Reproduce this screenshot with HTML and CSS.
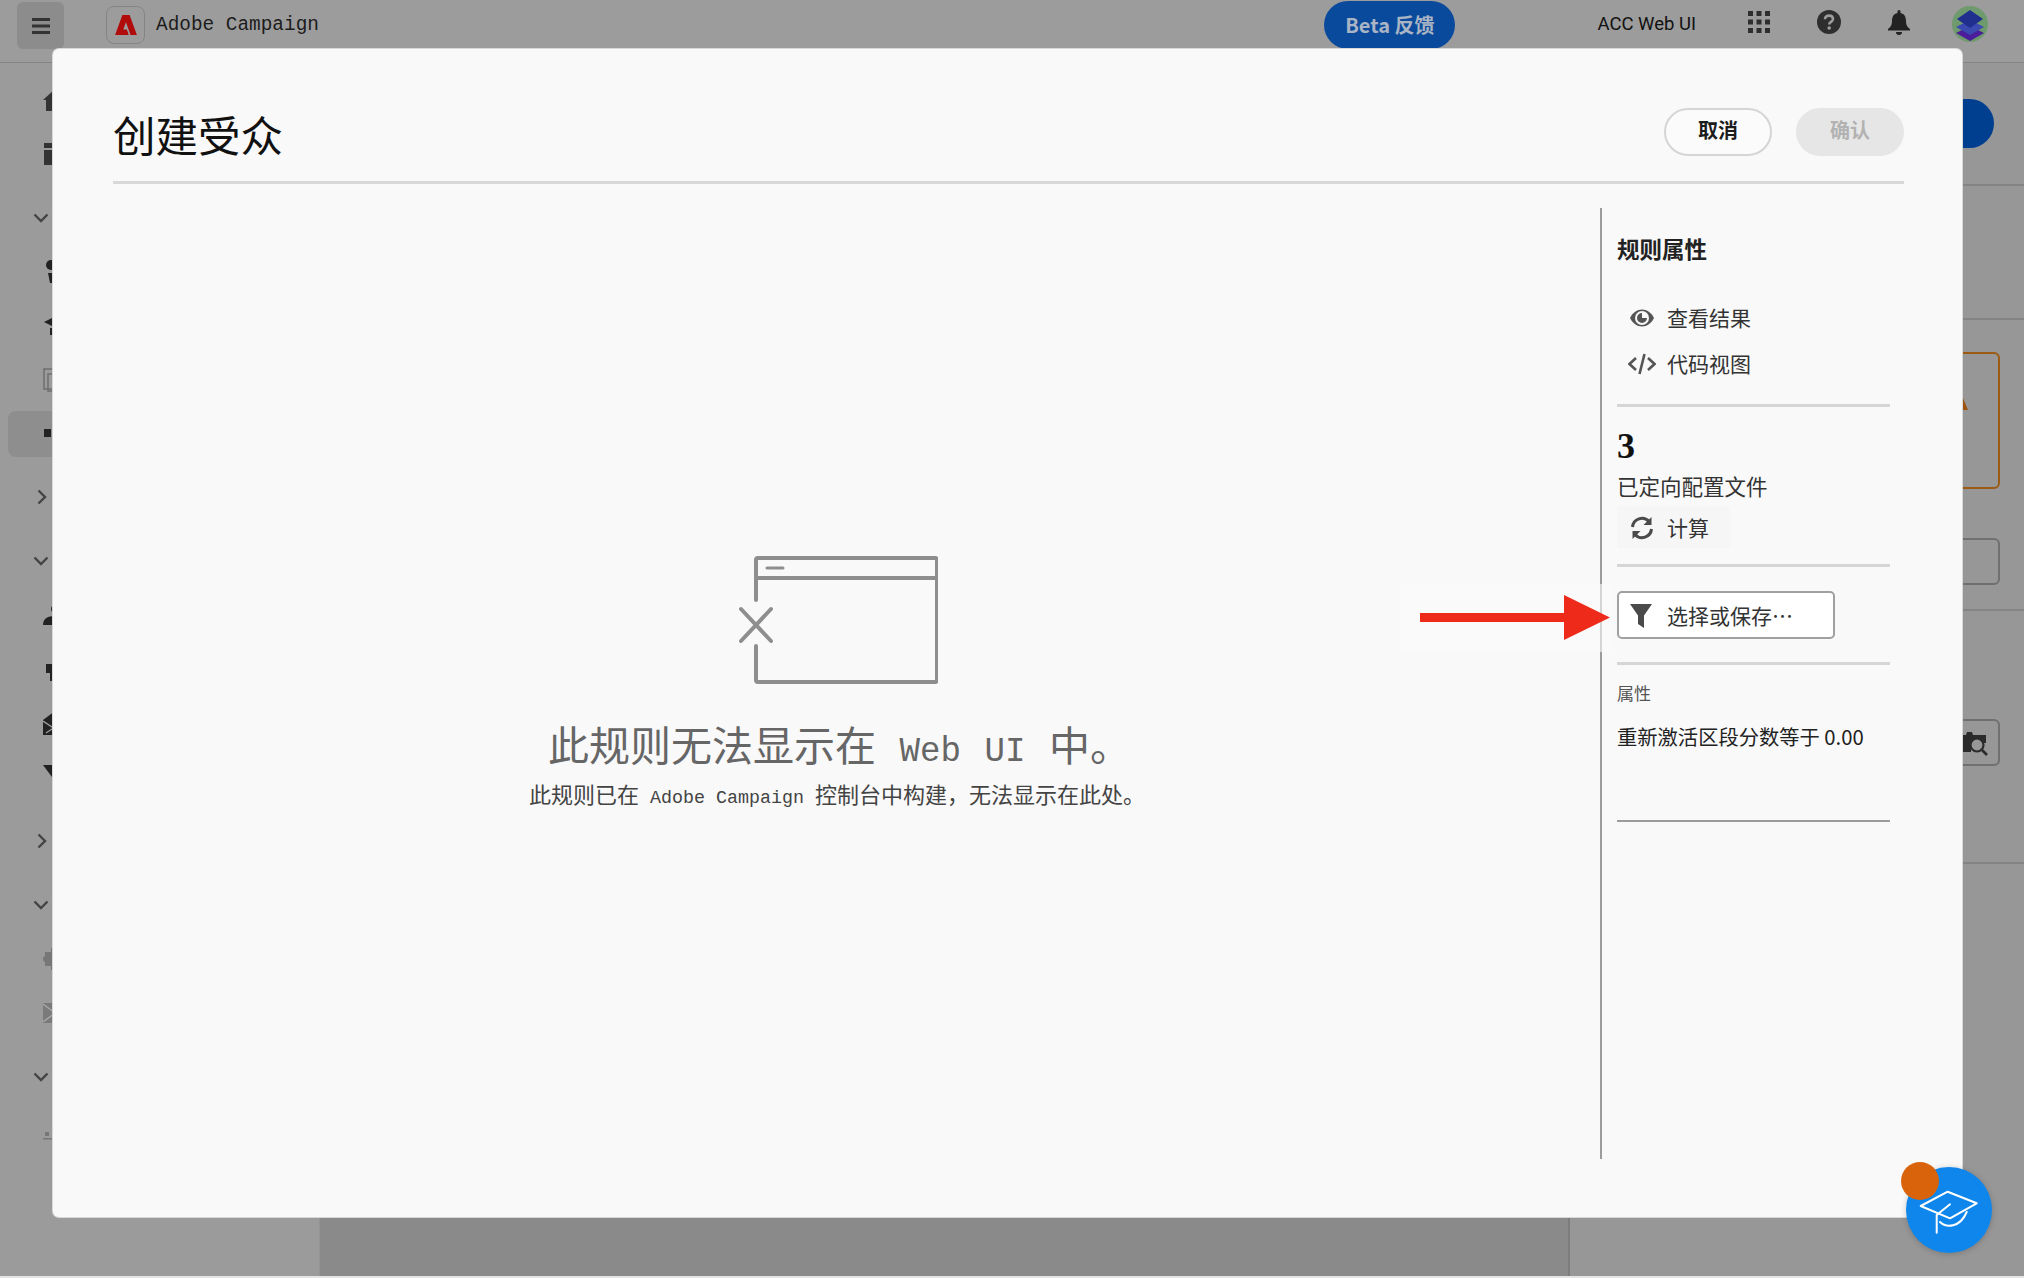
FILE: index.html
```html
<!DOCTYPE html>
<html lang="zh-CN">
<head>
	<meta charset="UTF-8">
	<title>创建受众</title>
	<link rel="stylesheet" href="styles.css">
</head>
<body>
	<div class="page">
		<header class="topbar">
			<div class="menu-btn">
				<svg width="18" height="16" viewBox="0 0 18 16"><path d="M0 1.500h18M0 8h18M0 14.500h18" stroke="#333" stroke-width="3"/></svg>
			</div>
			<div class="logo-box">
				<svg width="22" height="20" viewBox="0 0 24 22"><path d="M8 0h8l8 22h-7l-5-14-3 8h4l2 6H0z" fill="#b00c0c"/></svg>
			</div>
			<span class="app-name">Adobe Campaign</span>
			<div class="topbar-right">
				<span class="beta-btn">Beta 反馈</span>
				<span class="org-name">ACC Web UI</span>
				<svg class="grid-icon" width="22" height="22" viewBox="0 0 22 22" fill="#2e2e2e"><path d="M0 0h5v5H0zM8.500 0h5v5h-5zM17 0h5v5h-5zM0 8.500h5v5H0zM8.500 8.500h5v5h-5zM17 8.500h5v5h-5zM0 17h5v5H0zM8.500 17h5v5h-5zM17 17h5v5h-5z"/></svg>
				<svg class="help-icon" width="24" height="24" viewBox="0 0 24 24"><circle cx="12" cy="12" r="12" fill="#2e2e2e"/><path d="M8 9.200C8 7 9.800 5.600 12 5.600s4 1.300 4 3.400c0 2.900-3.800 2.900-3.800 5.400" fill="none" stroke="#9b9b9b" stroke-width="2.600"/><circle cx="12.200" cy="18" r="1.800" fill="#9b9b9b"/></svg>
				<svg class="bell-icon" width="22" height="25" viewBox="0 0 22 25" fill="#222"><path d="M9.500 1.500a1.500 1.500 0 0 1 3 0V3C16.500 3.800 18 7 18 11c0 4 1.200 6 4 8v1.500H0V19c2.800-2 4-4 4-8 0-4 1.500-7.200 5.500-8z"/><path d="M8 22h6a3 3 0 0 1-6 0z"/></svg>
				<svg class="avatar" width="36" height="38" viewBox="0 0 36 38">
					<ellipse cx="18" cy="18" rx="18" ry="18" fill="#6f9a6e"/>
					<path d="M4 27l14-7 14 7-14 8z" fill="#4b1d9a"/>
					<path d="M4 21l14-7 14 7-14 8z" fill="#3a4ab0"/>
					<path d="M5 13L18 4l13 9-13 9z" fill="#202f8e"/>
				</svg>
			</div>
		</header>

		<div class="page-body">
			<nav class="sidebar">
				<div class="nav-row"><svg width="24" height="24" viewBox="0 0 24 24" fill="#333"><path d="M0 12L12 1l12 11h-3v11H3V12z"/></svg></div>
				<div class="nav-row"><svg width="24" height="24" viewBox="0 0 24 24" fill="#333"><path d="M1 1h22v5H1zM1 8h22v15H1z"/></svg></div>
				<div class="nav-row nav-head"><svg width="16" height="10" viewBox="0 0 16 10"><path d="M1.500 1.500L8 8l6.500-6.500" fill="none" stroke="#444" stroke-width="2.400"/></svg></div>
				<div class="nav-row"><svg width="24" height="24" viewBox="0 0 24 24" fill="#222"><circle cx="8" cy="5" r="5"/><path d="M5 13h7l-2 10H7z"/></svg></div>
				<div class="nav-row"><svg width="24" height="24" viewBox="0 0 24 24" fill="#222"><path d="M1 8l10-5v10zM7 14h5v7H7z"/></svg></div>
				<div class="nav-row"><svg width="24" height="24" viewBox="0 0 24 24" fill="none" stroke="#6f6f6f" stroke-width="1.500"><path d="M1 1h18v20H1z"/><path d="M5 6h16v17H5z"/></svg></div>
				<div class="nav-row nav-active"><svg width="24" height="24" viewBox="0 0 24 24" fill="#222"><path d="M1 7h7v8H1zM10 9h14v4H10z"/></svg></div>
				<div class="nav-row nav-head"><svg class="chev-r" width="10" height="16" viewBox="0 0 10 16"><path d="M1.500 1.500L8 8l-6.500 6.500" fill="none" stroke="#444" stroke-width="2.400"/></svg></div>
				<div class="nav-row nav-head"><svg width="16" height="10" viewBox="0 0 16 10"><path d="M1.500 1.500L8 8l6.500-6.500" fill="none" stroke="#444" stroke-width="2.400"/></svg></div>
				<div class="nav-row"><svg width="24" height="24" viewBox="0 0 24 24" fill="#222"><circle cx="13" cy="6" r="5"/><path d="M0 22c0-6 4-9 12-9s12 3 12 9z"/></svg></div>
				<div class="nav-row"><svg width="24" height="24" viewBox="0 0 24 24" fill="#222"><circle cx="12" cy="3" r="3"/><path d="M3 7h18v9h-4v8H7v-8H3z"/></svg></div>
				<div class="nav-row"><svg width="24" height="24" viewBox="0 0 24 24" fill="#222"><path d="M0 9l12-9 12 9v15H0z"/><path d="M0 10l12 8M3 22l9-6" stroke="#9b9b9b" stroke-width="1.500"/></svg></div>
				<div class="nav-row"><svg width="24" height="24" viewBox="0 0 24 24" fill="#222"><path d="M0 0h24L12 12v12h-3V12z"/></svg></div>
				<div class="nav-row nav-head"><svg class="chev-r" width="10" height="16" viewBox="0 0 10 16"><path d="M1.500 1.500L8 8l-6.500 6.500" fill="none" stroke="#444" stroke-width="2.400"/></svg></div>
				<div class="nav-row nav-head"><svg width="16" height="10" viewBox="0 0 16 10"><path d="M1.500 1.500L8 8l6.500-6.500" fill="none" stroke="#444" stroke-width="2.400"/></svg></div>
				<div class="nav-row"><svg width="24" height="24" viewBox="0 0 24 24" fill="#777"><circle cx="3" cy="12" r="3"/><path d="M2 5h6V1h10v22H8v-4H2z"/></svg></div>
				<div class="nav-row"><svg width="24" height="24" viewBox="0 0 24 24" fill="#7a7a7a"><path d="M0 2h24v20H0z"/><path d="M0 3l12 9-12 9" fill="none" stroke="#a5a5a5" stroke-width="1.500"/></svg></div>
				<div class="nav-row nav-head"><svg width="16" height="10" viewBox="0 0 16 10"><path d="M1.500 1.500L8 8l6.500-6.500" fill="none" stroke="#444" stroke-width="2.400"/></svg></div>
				<div class="nav-row"><svg width="24" height="24" viewBox="0 0 24 24" fill="#777"><path d="M0 19h24v1.500H0zM2 13h4v4H2z"/></svg></div>
			</nav>

			<main class="content"></main>

			<aside class="side">
				<section class="side-sec side-one"><div class="pill-blue"></div></section>
				<section class="side-sec side-two"></section>
				<section class="side-sec side-three">
					<div class="box box-warn"><svg width="8" height="12" viewBox="0 0 8 12"><path d="M3 0l5 12H0z" fill="#9c5410"/></svg></div>
					<div class="box"></div>
				</section>
				<section class="side-sec side-four">
					<div class="box box-search">
						<svg width="26" height="26" viewBox="0 0 26 26"><path d="M0 5h4l1-3h5l1 3h13v8H0zM0 13h9v9H0z" fill="#2b2b2b"/><circle cx="15" cy="15" r="6.500" fill="#979797" stroke="#2b2b2b" stroke-width="2.200"/><path d="M20 20l5 5" stroke="#2b2b2b" stroke-width="2.600"/></svg>
					</div>
				</section>
			</aside>
		</div>
	</div>

	<div class="modal">
		<div class="modal-head">
			<h1 class="modal-title">创建受众</h1>
			<div class="modal-btns">
				<span class="btn btn-cancel">取消</span>
				<span class="btn btn-ok">确认</span>
			</div>
		</div>
		<div class="modal-body">
			<div class="empty">
				<svg class="empty-img" width="199" height="128" viewBox="0 0 199 128" fill="none" stroke="#8e8e8e" stroke-width="4" stroke-linecap="round" stroke-linejoin="round">
					<path d="M17 44V4a2 2 0 0 1 2-2h177a2 2 0 0 1 2 2v120a2 2 0 0 1-2 2H19a2 2 0 0 1-2-2V90"/>
					<path d="M17 22h181"/>
					<path d="M28 12h16" stroke-width="3"/>
					<path d="M2 53l30 32M32 53L2 85"/>
				</svg>
				<h2 class="empty-title">此规则无法显示在<span class="latin"> Web UI </span>中。</h2>
				<p class="empty-text">此规则已在<span class="latin"> Adobe Campaign </span>控制台中构建，无法显示在此处。</p>
			</div>
			<div class="props">
				<div class="props-title">规则属性</div>
				<div class="act act-first">
					<svg width="24" height="24" viewBox="0 0 24 24"><path d="M0 12c2.800-5.500 7-8.500 12-8.500S21.200 6.500 24 12c-2.800 5.500-7 8.500-12 8.500S2.800 17.500 0 12z" fill="#555"/><circle cx="12" cy="12" r="7" fill="#f9f9f9"/><path d="M12 7a5 5 0 1 0 5 5h-5z" fill="#555"/></svg>
					<span>查看结果</span>
				</div>
				<div class="act">
					<svg class="code-icon" width="28" height="24" viewBox="0 0 28 24" fill="none" stroke="#555" stroke-width="2.600"><path d="M8 6l-6.500 6L8 18M20 6l6.500 6L20 18M16.500 2l-5 20"/></svg>
					<span>代码视图</span>
				</div>
				<div class="line line-a"></div>
				<div class="count">3</div>
				<div class="count-label">已定向配置文件</div>
				<div class="act act-calc">
					<svg width="24" height="24" viewBox="0 0 24 24" fill="none" stroke="#4a4a4a" stroke-width="3"><path d="M2.500 11A9.500 9.500 0 0 1 19 5.500M21.500 13A9.500 9.500 0 0 1 5 18.500"/><path d="M21.500 1v8h-8zM2.500 23v-8h8z" fill="#4a4a4a" stroke="none"/></svg>
					<span>计算</span>
				</div>
				<div class="line line-b"></div>
				<div class="select-btn">
					<svg width="22" height="24" viewBox="0 0 22 24" fill="#4a4a4a"><path d="M0 0h22l-8 11.500V24l-6-4v-8.500z"/></svg>
					<span>选择或保存…</span>
				</div>
				<div class="line line-c"></div>
				<div class="attr-label">属性</div>
				<div class="attr-value">重新激活区段分数等于 0.00</div>
				<div class="line line-end"></div>
			</div>
		</div>
	</div>

	<svg class="arrow" width="212" height="68" viewBox="0 0 212 68"><path d="M20 29h144V11l46 22.500L164 56V38H20z" fill="#ee2a1a"/></svg>

	<div class="fab">
		<svg width="86" height="86" viewBox="0 0 86 86" fill="none" stroke="#fff" stroke-width="2" stroke-linejoin="round" stroke-linecap="round">
			<path d="M14.700 39L41.700 24.700 70.700 36.300 44 51.300z"/>
			<path d="M44 37.300L30.700 48V65.700"/>
			<path d="M34 55c6 6 20 6 26.700-10"/>
		</svg>
	</div>
	<div class="fab-dot"></div>
</body>
</html>
```

FILE: styles.css
```css
html, body {
	margin: 0;
	padding: 0;
}
body {
	height: 1278px;
	overflow: hidden;
	background: #e4e4e4;
	font-family: "Noto Sans CJK SC", "Liberation Sans", sans-serif;
	color: #222;
}
h1, h2, p {
	margin: 0;
	font-weight: 400;
}
svg {
	display: block;
	flex: none;
}
.latin {
	font-family: "Liberation Mono", monospace;
	font-size: .833em;
}

/* page behind the dialog */
.page {
	height: 1276px;
	display: flex;
	flex-direction: column;
	background: #9b9b9b;
}
.topbar {
	height: 62px;
	flex: none;
	display: flex;
	align-items: flex-start;
	padding-left: 17px;
	border-bottom: 1px solid #848484;
	background: #9c9c9c;
}
.menu-btn {
	width: 47px;
	height: 47px;
	margin-top: 2px;
	display: flex;
	align-items: center;
	justify-content: center;
	border-radius: 6px;
	background: #8c8c8c;
}
.logo-box {
	width: 37px;
	height: 36px;
	margin: 6px 0 0 42px;
	display: flex;
	align-items: center;
	justify-content: center;
	border: 1px solid #848484;
	border-radius: 8px;
}
.app-name {
	margin: 9px 0 0 11px;
	font: 19.400px/32px "Liberation Mono", monospace;
	color: #1c1c1c;
}
.topbar-right {
	margin-left: auto;
	display: flex;
	align-items: flex-start;
	padding-right: 36px;
}
.beta-btn {
	width: 131px;
	height: 48px;
	margin-top: 1px;
	border-radius: 24px;
	background: #0a4a9c;
	color: #a9b4c4;
	font: 700 20px/48px "Noto Sans CJK SC", sans-serif;
	text-align: center;
}
.org-name {
	margin: 8px 0 0 142px;
	font: 18.500px/32px "Roboto", sans-serif;
	color: #111;
}
.grid-icon {
	margin: 11px 0 0 52px;
}
.help-icon {
	margin: 10px 0 0 47px;
}
.bell-icon {
	margin: 10px 0 0 47px;
}
.avatar {
	margin: 6px 0 0 42px;
}

.page-body {
	flex: 1;
	display: flex;
	min-height: 0;
}
.sidebar {
	width: 320px;
	flex: none;
	box-sizing: border-box;
	padding: 10px 0 0 8px;
	border-right: 1px solid #949494;
}
.nav-row {
	height: 54px;
	display: flex;
	align-items: center;
	padding-left: 35px;
}
.nav-head {
	margin-top: 10px;
	padding-left: 25px;
}
.chev-r {
	margin-left: 4px;
}
.nav-row.nav-active {
	height: 46px;
	margin: 4px 0;
	border-radius: 8px;
	background: #8e8e8e;
}
.nav-active + .nav-head {
	margin-top: 13px;
}
.content {
	flex: 1;
	background: #8a8a8a;
	border-right: 2px solid #7d7d7d;
}
.side {
	width: 454px;
	flex: none;
	background: #979797;
}
.side-sec {
	box-sizing: border-box;
	border-bottom: 2px solid #848484;
	padding-right: 24px;
}
.side-one {
	height: 123px;
	padding-top: 36px;
	padding-right: 30px;
}
.pill-blue {
	width: 200px;
	height: 49px;
	margin-left: auto;
	border-radius: 25px;
	background: #003f8f;
}
.side-two {
	height: 134px;
}
.side-three {
	height: 291px;
	padding-top: 32px;
}
.side-four {
	height: 253px;
	padding-top: 108px;
}
.box {
	width: 200px;
	height: 47px;
	margin-left: auto;
	box-sizing: border-box;
	border: 2px solid #707070;
	border-radius: 6px;
}
.box + .box {
	margin-top: 49px;
}
.box-warn {
	height: 137px;
	display: flex;
	align-items: flex-start;
	justify-content: flex-end;
	padding: 44px 30px 0 0;
	border-color: #9c5a14;
}
.box-search {
	display: flex;
	align-items: center;
	justify-content: flex-end;
	padding-right: 10px;
}

/* dialog */
.modal {
	position: absolute;
	left: 53px;
	top: 49px;
	width: 1909px;
	height: 1168px;
	box-sizing: border-box;
	padding: 0 58px 0 60px;
	border-radius: 6px;
	background: #f9f9f9;
	box-shadow: 0 0 0 1px #d8d8d8;
}
.modal-head {
	display: flex;
	align-items: flex-start;
	justify-content: space-between;
	padding: 59px 0 25px;
	border-bottom: 3px solid #d8d8d8;
}
.modal-title {
	margin-top: 6px;
	font-size: 42.500px;
	line-height: 40px;
	color: #111;
}
.modal-btns {
	display: flex;
	gap: 24px;
}
.btn {
	width: 108px;
	height: 48px;
	box-sizing: border-box;
	border-radius: 24px;
	font-size: 20px;
	font-weight: 700;
	line-height: 40px;
	text-align: center;
}
.btn-cancel {
	border: 2px solid #d5d5d5;
	background: #fbfbfb;
	color: #1c1c1c;
}
.btn-ok {
	border: 2px solid #e6e6e6;
	background: #e6e6e6;
	color: #b2b2b2;
}
.modal-body {
	height: 951px;
	margin-top: 24px;
	display: flex;
}
.empty {
	width: 1487px;
	flex: none;
	padding: 348px 45px 0 0;
	box-sizing: border-box;
	display: flex;
	flex-direction: column;
	align-items: center;
}
.empty-img {
	margin-left: 8px;
}
.empty-title {
	margin: 31px 0 0 11px;
	font-size: 41px;
	line-height: 56px;
	word-spacing: 3px;
	color: #666;
	white-space: pre;
}
.empty-text {
	font-size: 22px;
	line-height: 28px;
	margin: -1px 0 0 6px;
	color: #444;
	white-space: pre;
}

/* rule properties column */
.props {
	width: 290px;
	flex: none;
	box-sizing: border-box;
	padding: 25px 0 0 15px;
	border-left: 2px solid #9c9c9c;
}
.props-title {
	font-size: 22.500px;
	font-weight: 700;
	line-height: 30px;
	color: #222;
}
.act {
	height: 46px;
	display: flex;
	align-items: center;
	gap: 13px;
	padding-left: 13px;
	font-size: 21px;
	color: #333;
}
.act svg, .select-btn svg {
	margin-top: 2px;
}
.act .code-icon {
	margin: 2px -2px 0;
}
.act-first {
	margin-top: 31px;
}
.act-calc {
	width: 100px;
	height: 42px;
	margin-top: 6px;
	background: #f6f6f6;
}
.line {
	width: 273px;
	height: 3px;
	background: #d6d6d6;
}
.line-a {
	margin-top: 18px;
}
.line-b {
	margin-top: 16px;
}
.line-c {
	margin-top: 23px;
}
.line-end {
	height: 2px;
	margin-top: 70px;
	background: #9c9c9c;
}
.count {
	margin-top: 17px;
	font: 700 36px/44px "Liberation Serif", serif;
	color: #111;
}
.count-label {
	margin-top: 4px;
	font-size: 21.500px;
	line-height: 28px;
	color: #333;
}
.select-btn {
	width: 218px;
	height: 48px;
	margin-top: 24px;
	box-sizing: border-box;
	display: flex;
	align-items: center;
	gap: 15px;
	padding-left: 11px;
	border: 2px solid #a0a0a0;
	border-radius: 5px;
	background: #fff;
	font-size: 21px;
	color: #333;
}
.attr-label {
	margin-top: 16px;
	font-size: 17px;
	line-height: 24px;
	color: #555;
}
.attr-value {
	margin-top: 17px;
	font-size: 20.300px;
	line-height: 28px;
	color: #222;
	white-space: nowrap;
}

/* things over the dialog */
.arrow {
	position: absolute;
	left: 1400px;
	top: 584px;
	background: rgba(250, 250, 250, .6);
}
.fab {
	position: absolute;
	left: 1906px;
	top: 1167px;
	width: 86px;
	height: 86px;
	border-radius: 50%;
	background: #0f86ec;
	box-shadow: 0 1px 6px rgba(0, 0, 0, .2);
}
.fab-dot {
	position: absolute;
	left: 1901px;
	top: 1162px;
	width: 38px;
	height: 38px;
	border-radius: 50%;
	background: #d9630a;
}
```
